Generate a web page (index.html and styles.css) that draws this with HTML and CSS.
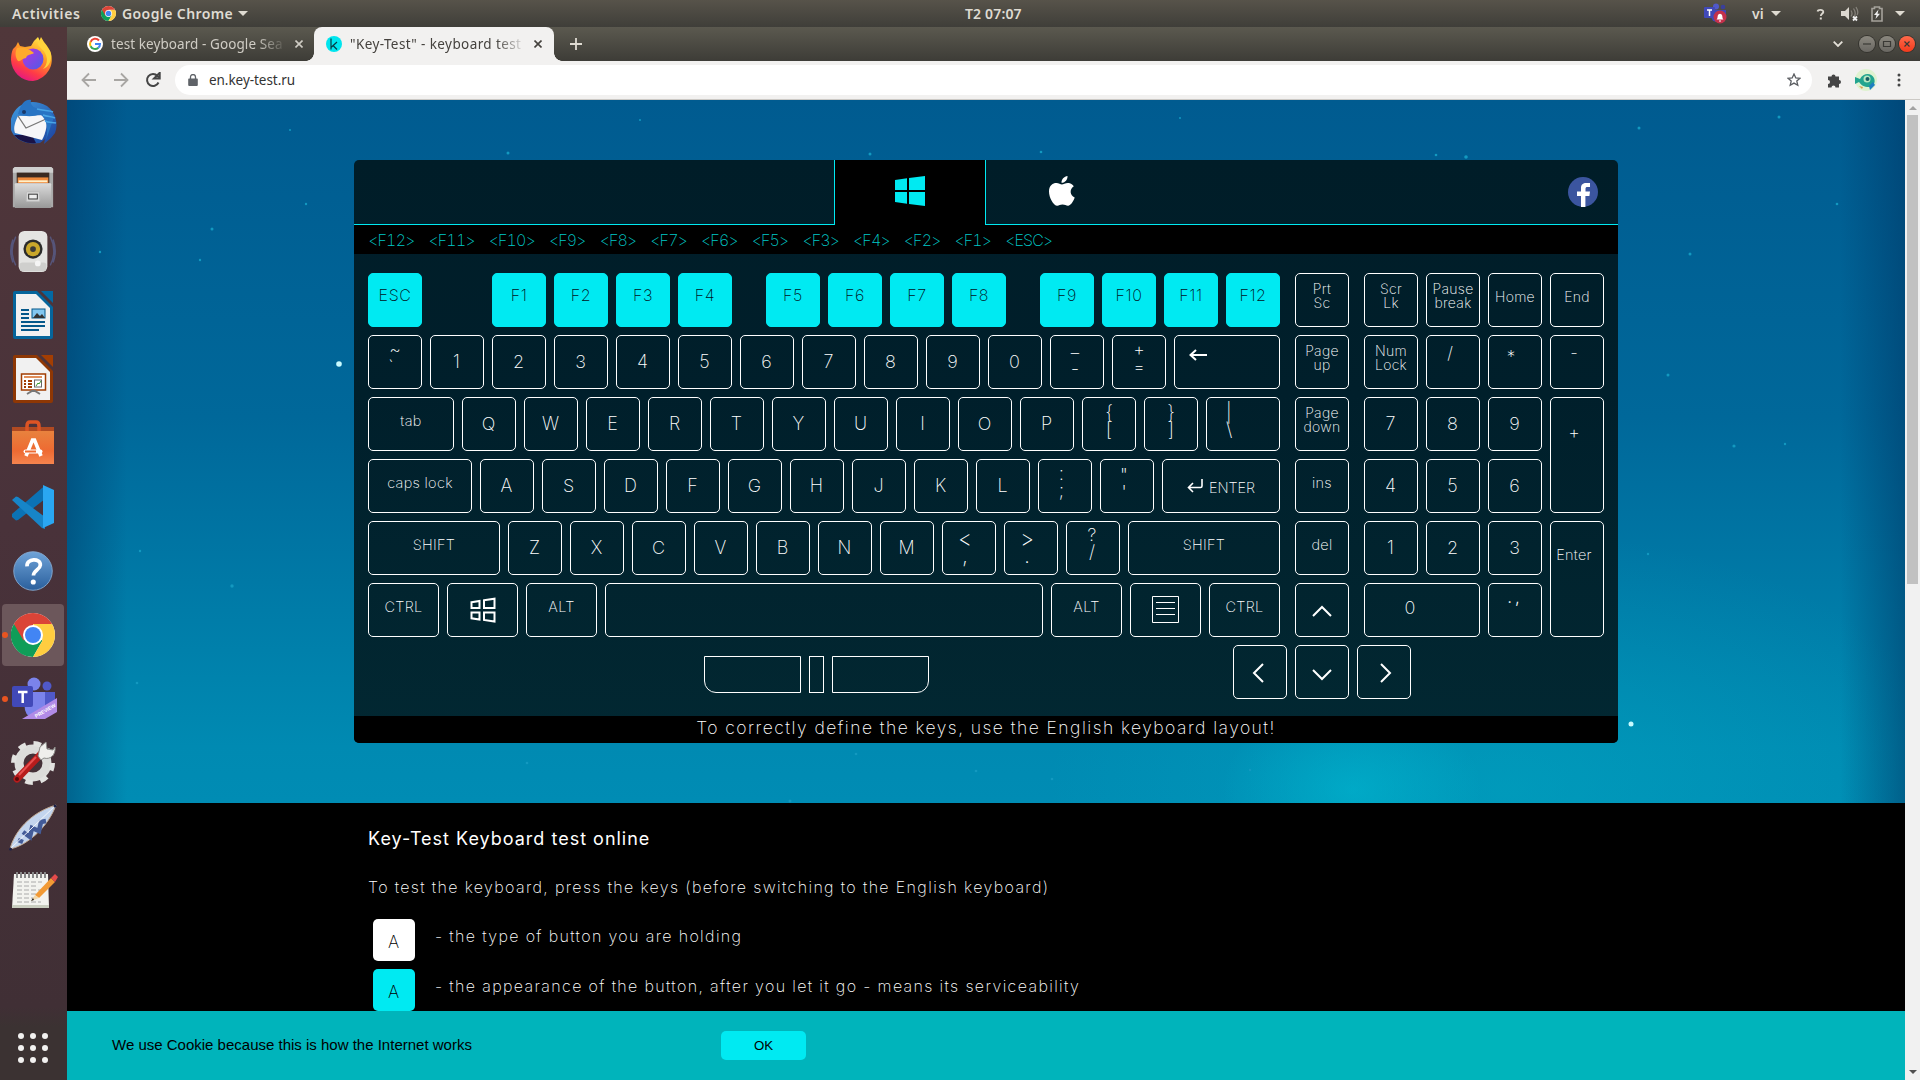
FILE: index.html
```html
<!DOCTYPE html>
<html lang="en">
<head>
<meta charset="utf-8">
<title>"Key-Test" - keyboard test online</title>
<link rel="stylesheet" href="styles.css">
</head>
<body>
<svg class="defs" aria-hidden="true">
  <defs>
    <linearGradient id="fox" x1="0.8" y1="0" x2="0.3" y2="1"><stop offset="0" stop-color="#fff04a"/><stop offset=".4" stop-color="#ff9a26"/><stop offset=".75" stop-color="#ff3b47"/><stop offset="1" stop-color="#e31587"/></linearGradient>
    <linearGradient id="globe" x1="0" y1="0" x2="1" y2="1"><stop offset="0" stop-color="#b833e1"/><stop offset="1" stop-color="#4c5ce8"/></linearGradient>
    <linearGradient id="bird" x1="0" y1="0" x2="1" y2="1"><stop offset="0" stop-color="#3f9be0"/><stop offset="1" stop-color="#1b3f9c"/></linearGradient>
    <linearGradient id="steel" x1="0" y1="0" x2="0" y2="1"><stop offset="0" stop-color="#dcdcdc"/><stop offset="1" stop-color="#989898"/></linearGradient>
    <linearGradient id="help" x1="0" y1="0" x2="0" y2="1"><stop offset="0" stop-color="#6fa3d8"/><stop offset="1" stop-color="#2a5f9c"/></linearGradient>
    <linearGradient id="bag" x1="0" y1="0" x2="0" y2="1"><stop offset="0" stop-color="#e8823e"/><stop offset=".6" stop-color="#ee6a32"/><stop offset="1" stop-color="#f5844e"/></linearGradient>
    <symbol id="chrome" viewBox="0 0 44 44">
      <circle cx="22" cy="22" r="22" fill="#fff"/>
      <path d="M2.900 11A22 22 0 0 0 22 44l9.500-16.500L22 22z" fill="#0f9d58"/>
      <path d="M41 11H22l9.500 16.500L22 44A22 22 0 0 0 41 11z" fill="#ffcd40"/>
      <path d="M2.900 11 12.500 27.500 22 22 22 11H41A22 22 0 0 0 2.900 11z" fill="#db4437"/>
      <circle cx="22" cy="22" r="10" fill="#fff"/><circle cx="22" cy="22" r="8" fill="#4285f4"/>
    </symbol>
  </defs>
</svg>

<header class="topbar">
  <span class="activities">Activities</span>
  <svg class="app-ico" viewBox="0 0 44 44"><use href="#chrome"/></svg>
  <span class="appname">Google Chrome</span>
  <i class="caret"></i>
  <span class="clock">T2 07:07</span>
  <div class="tray">
    <svg width="24" height="22" viewBox="0 0 24 22"><circle cx="12" cy="3.500" r="3" fill="#5059c9"/><circle cx="19" cy="4" r="2.300" fill="#3a3f9c"/><path d="M7 7h15v6a6 6 0 0 1-6 6h-3a6 6 0 0 1-6-6z" fill="#4048b5"/><rect y="4" width="11" height="11" rx="1" fill="#4149b8"/><path d="M3 7h5M5.500 7v6" stroke="#fff" stroke-width="1.500"/><circle cx="16" cy="14" r="6.500" fill="#c4314b"/><path d="M12.500 16.500c1.200-1 1-2.500 1.300-4a2.300 2.300 0 0 1 4.400 0c.3 1.500.1 3 1.300 4zM15 17.500h2v1h-2z" fill="#fff"/></svg>
    <span class="lang">vi</span><i class="caret c2"></i>
    <svg class="t-q" width="12" height="14" viewBox="0 0 12 14"><path d="M2.500 4.500C3 2.500 8.500 2.200 8.300 5 8 6.800 5.800 6.800 5.800 9" fill="none" stroke="#dcd8d0" stroke-width="1.800"/><rect x="4.800" y="10.500" width="2" height="2" fill="#dcd8d0"/></svg>
    <svg class="t-s" width="18" height="16" viewBox="0 0 18 16"><path d="M0 5h4l4-4v13l-4-4H0z" fill="#dcd8d0"/><path d="M10 4.500q2 3 0 6M12.500 2.500q3.500 5 0 9.500M15 1q3 5 1 8" fill="none" stroke="#85827b" stroke-width="1.300"/><path d="m12 10.500 4 4m0-4-4 4" stroke="#eee" stroke-width="1.800"/></svg>
    <svg class="t-b" width="12" height="16" viewBox="0 0 12 16"><path d="M1 2.500h2.500V1h5v1.500H11V15H1z" fill="none" stroke="#a5a29b" stroke-width="1.600"/><path d="M7.500 3.500 3 9h2.500L4.500 13 9 7.800H6.500z" fill="#eee"/></svg>
    <i class="caret c3"></i>
  </div>
</header>

<div class="desk">
<nav class="dock">
  <div class="slot s1"><svg viewBox="0 0 48 48"><path d="M4 14l3-3 2-4 2 4 5 1 6-1 3-5 4-4 3 6 4 3 1 3 4 2c3 7 2 14-1 19A22 22 0 0 1 24 46 22 22 0 0 1 2 25c0-4 .5-8 2-11z" fill="url(#fox)"/><circle cx="24" cy="24" r="10.500" fill="url(#globe)"/><path d="M8 13c6-1 9 0 13 2l4 3c-3 2-7 1-8 5-3 0-6 4-8 3-3-4-3-9-1-13z" fill="#ffab2e"/><path d="M29 9c1 4 8 6 9 15 0 5-2 8-4 10 6-2 9-9 8-15-1-5-4-8-7-12l-3-5z" fill="#ffd43c"/></svg></div>
  <div class="slot s2"><svg viewBox="0 0 48 48"><path d="M2 20C6 5 22-2 38 7c8 6 12 17 8 27l-4 5-7 6 1-5-5 4C16 46 5 40 2 31z" fill="url(#bird)"/><path d="M5 36c5 6 14 9 22 8l-4-8z" fill="#191347"/><path d="M9 17l28-1c2 8 0 18-4 25L6 34c-2-5 0-11 3-17z" fill="#f6f6f8"/><path d="m9 17 8 12 20-9" fill="none" stroke="#777" stroke-width="1.300"/><path d="M9 15C12 4 17 0 22 1c-2 7 8 11 17 9l6 8-8 23c2-9 2-20-6-26-6 3-15 3-22 0z" fill="#2874c4"/><path d="M28 10c7 2 12 1 16 3M34 16c5 2 8 1 12 3M36 22c4 2 7 1 11 2" stroke="#49a5e6" stroke-width="1.500" fill="none"/><circle cx="15" cy="13" r="2" fill="#18396b"/></svg></div>
  <div class="slot s3"><svg viewBox="0 0 48 48"><path d="M3 5l2-2h38l2 2v40H3z" fill="#aaa"/><path d="M3 5l2-2h38l2 2v4H3z" fill="#cfcfcf"/><rect x="7" y="9" width="34" height="11" fill="#3a2a22"/><path d="M8 14h32v6H8z" fill="#f08a3c"/><path d="M9 17h30v2H9z" fill="#fff0c8"/><rect x="5" y="20" width="38" height="26" rx="1" fill="url(#steel)"/><rect x="17" y="29" width="14" height="10" rx="1" fill="#d8d8d8" stroke="#bbb"/><rect x="19.500" y="31.500" width="9" height="5" fill="#eee" stroke="#333"/></svg></div>
  <div class="slot s4"><svg viewBox="0 0 48 48"><path d="M6 9C1 19 1 29 6 39M3 12c-3 8-3 16 0 24M42 9c5 10 5 20 0 30M45 12c3 8 3 16 0 24" fill="none" stroke="#56557a" stroke-width="1.500"/><rect x="9" y="3" width="30" height="43" rx="6" fill="#e4e4e2"/><rect x="10" y="36" width="28" height="9" rx="3" fill="#cfcfcd"/><circle cx="24" cy="22" r="10" fill="#2b2b2b"/><circle cx="24" cy="22" r="7.500" fill="#c9a72b"/><circle cx="24" cy="22" r="3" fill="#3b3a38"/><circle cx="29" cy="37" r="3" fill="#f5f5f5"/></svg></div>
  <div class="slot s5"><svg viewBox="0 0 48 48"><path d="M6 0h22l16 16v30a2 2 0 0 1-2 2H6a2 2 0 0 1-2-2V2a2 2 0 0 1 2-2z" fill="#05659b"/><path d="M7 3h20l14 14v28H7z" fill="#f1f1f1"/><path d="M32 0h12v12z" fill="#0369a3"/><path d="M12 19h8M12 23h8M12 27h8M12 31h24M12 35h24M12 39h18" stroke="#05588a" stroke-width="2"/><rect x="23" y="18" width="13" height="9" fill="#83c7f0" stroke="#05588a"/><path d="m24 27 4-5 3 3 2-2 3 4z" fill="#333"/></svg></div>
  <div class="slot s6"><svg viewBox="0 0 48 48"><path d="M6 0h22l16 16v30a2 2 0 0 1-2 2H6a2 2 0 0 1-2-2V2a2 2 0 0 1 2-2z" fill="#8e3704"/><path d="M7 3h20l14 14v28H7z" fill="#f1f1f1"/><path d="M32 0h12v12z" fill="#a33e03"/><rect x="12.500" y="19" width="24" height="16" fill="#fff" stroke="#a13e03" stroke-width="1.500"/><path d="M15 22h18" stroke="#e08f5b" stroke-width="2"/><path d="M15 26h8M15 29h8M15 32h8" stroke="#a13e03" stroke-width="2" stroke-dasharray="2 2 5"/><rect x="25.500" y="25" width="7" height="7" fill="#fff" stroke="#666"/><path d="m27 31 2-3 1 1 2-3" stroke="#3a9b2d" fill="none"/><path d="m18 39 5-3h3l5 3" fill="none" stroke="#777" stroke-width="2"/></svg></div>
  <div class="slot s7"><svg viewBox="0 0 48 48"><path d="M3 8h42v7H3z" fill="#b04a22"/><path d="M18 15V7q0-4 3-4h6q3 0 3 4v8" fill="none" stroke="#dd5424" stroke-width="3.500"/><path d="M3 12h42v33H3z" fill="url(#bag)"/><path d="m17 37 6.500-16h2L32 37" fill="none" stroke="#fff" stroke-width="3.600"/><rect x="14.500" y="30.500" width="19" height="4" rx="2" fill="#fff"/><path d="M16 32.500h11" stroke="#ee6a32" stroke-width="2"/></svg></div>
  <div class="slot s8"><svg viewBox="0 0 48 48"><path d="m3 31 30-26 3-2v13L9 37l-2 .500-4-3.500z" fill="#0b72b5"/><path d="m3 17 4-3.500 2 .5 27 20v12l-3-1L3 17z" fill="#1785c8"/><path d="m34 2 11 5v33l-11 5z" fill="#2aa7f2"/></svg></div>
  <div class="slot s9"><svg viewBox="0 0 48 48"><circle cx="24" cy="24" r="21" fill="url(#help)" stroke="#84a9d0"/><path d="M17.500 19c-1-9 15-9.500 14.500-1.500-.5 5.500-7.500 5.500-7.500 11.500" fill="none" stroke="#fff" stroke-width="4"/><circle cx="24.300" cy="36" r="2.800" fill="#fff"/></svg></div>
  <div class="slot s10 active"><svg viewBox="0 0 44 44"><use href="#chrome"/></svg></div>
  <div class="slot s11 running"><svg viewBox="0 0 48 48"><circle cx="25" cy="9" r="6.500" fill="#7b83eb"/><circle cx="38" cy="11" r="4.500" fill="#5059c9"/><path d="M34 17h12v14a8 8 0 0 1-10 7z" fill="#5059c9"/><path d="M14 17h22v14a10 10 0 0 1-20 4z" fill="#7b83eb"/><rect x="3" y="11" width="21" height="21" rx="2" fill="#4149b8"/><path d="M9 17h9.500M13.700 17v11" stroke="#fff" stroke-width="2.500"/><path d="M13 44 48 23v14L36 44z" fill="#b18be6"/><text transform="translate(27 43) rotate(-30)" class="preview">PREVIEW</text></svg></div>
  <div class="slot s12"><svg viewBox="0 0 48 48"><circle cx="24" cy="24" r="14" fill="none" stroke="#dcdcda" stroke-width="9"/><circle cx="24" cy="24" r="19.500" fill="none" stroke="#e2e2e0" stroke-width="5" stroke-dasharray="7.600 7.700"/><path d="m8 40 24-25" stroke="#b71c1c" stroke-width="7" stroke-linecap="round"/><path d="m10 36 17-18" stroke="#e85050" stroke-width="2"/><circle cx="8" cy="40" r="2" fill="#5c0a0a"/><path d="m29 17 2-9 6-5 1 7 6 1 2-3c1 8-5 13-11 11l-3 2z" fill="#efefec" stroke="#8b8b88"/></svg></div>
  <div class="slot s13"><svg viewBox="0 0 48 48"><path d="M1 46C5 30 20 10 47 2 40 22 20 42 1 46z" fill="#c3d5ee" stroke="#c2aa93"/><path d="M9 37l5 2M14 29l7 5 2-9 7 3 2-9 5-1" fill="none" stroke="#435b98" stroke-width="4.500"/><path d="M1 46 47 2" stroke="#f3f6fa"/><circle cx="1.500" cy="46" r="1.500" fill="#1c2148"/><circle cx="46" cy="3" r="1.500" fill="#1c2148"/></svg></div>
  <div class="slot s14"><svg viewBox="0 0 48 48"><path d="M5 7h34l1 34H3z" fill="#f3f3ef"/><path d="M3 38h37v3H3z" fill="#c9cdbf"/><path d="M8 15h25M8 19h20M8 23h24M8 27h20M8 31h18M8 35h24" stroke="#aaa" stroke-dasharray="5 2"/><path d="M8 5v6M12 5v6M16 5v6M20 5v6M24 5v6M28 5v6M32 5v6M36 5v6" stroke="#888" stroke-width="2"/><path d="m26 28 16-17 4 4-16 16z" fill="#f29a35"/><path d="m42 11 4-4 3 3-3 5z" fill="#e34b4b"/><path d="m26 28 4 3-8 3z" fill="#f3d9aa"/><path d="m22 34 2-3 1 2z" fill="#222"/></svg></div>
  <div class="slot grid9"><svg viewBox="0 0 48 48" fill="#f2f1f0"><circle cx="12" cy="12" r="3"/><circle cx="24" cy="12" r="3"/><circle cx="36" cy="12" r="3"/><circle cx="12" cy="24" r="3"/><circle cx="24" cy="24" r="3"/><circle cx="36" cy="24" r="3"/><circle cx="12" cy="36" r="3"/><circle cx="24" cy="36" r="3"/><circle cx="36" cy="36" r="3"/></svg></div>
</nav>

<div class="browser">
  <div class="tabs">
    <div class="tab">
      <svg class="fav" viewBox="0 0 16 16"><circle cx="8" cy="8" r="8" fill="#fff"/><path d="M12 4.500A5 5 0 0 0 3.600 5.800" fill="none" stroke="#ea4335" stroke-width="2"/><path d="M3.600 5.700a5 5 0 0 0 0 4.600" fill="none" stroke="#fbbc05" stroke-width="2"/><path d="M3.600 10.200a5 5 0 0 0 7.800 1.500" fill="none" stroke="#34a853" stroke-width="2"/><path d="M11.300 11.800A5 5 0 0 0 13 8H8" fill="none" stroke="#4285f4" stroke-width="2"/></svg>
      <span class="tt">test keyboard - Google Sea</span>
      <svg class="x" viewBox="0 0 8 8"><path d="m.5.500 7 7m0-7-7 7"/></svg>
    </div>
    <div class="tab on">
      <svg class="fav" viewBox="0 0 16 16"><circle cx="8" cy="8" r="8" fill="#00e5ee"/><path d="M5 2.500v11M11 6l-6 5.500M7 9.500l4 4" fill="none" stroke="#063b45" stroke-width="1.200"/></svg>
      <span class="tt">"Key-Test" - keyboard test</span>
      <svg class="x" viewBox="0 0 8 8"><path d="m.5.500 7 7m0-7-7 7"/></svg>
    </div>
    <svg class="plus" viewBox="0 0 12 12"><path d="M6 0v12M0 6h12"/></svg>
    <div class="winctl">
      <svg width="10" height="6" viewBox="0 0 10 6"><path d="m.7.700 4.300 4.300L9.300.700" fill="none" stroke="#e4e0d8" stroke-width="1.800"/></svg>
      <i class="wc"><svg viewBox="0 0 16 16"><path d="M4 8h8"/></svg></i>
      <i class="wc"><svg viewBox="0 0 16 16"><path d="M4.500 5.500h7v5h-7z"/></svg></i>
      <i class="wc red"><svg viewBox="0 0 16 16"><path d="m5.500 5.500 5 5m0-5-5 5"/></svg></i>
    </div>
  </div>
  <div class="toolbar">
    <svg class="nav dim" viewBox="0 0 16 16"><path d="M15 8H2M8 1.500 1.500 8 8 14.500"/></svg>
    <svg class="nav dim" viewBox="0 0 16 16"><path d="M1 8h13M8 1.500 14.500 8 8 14.500"/></svg>
    <svg class="nav" viewBox="0 0 16 16"><path d="M13.500 10.500A6 6 0 1 1 12.500 4l1.500 1.500"/><path d="M14.700.8v5.700H9z" fill="#454545" stroke="none"/></svg>
    <div class="omni">
      <svg width="10" height="12" viewBox="0 0 10 12"><path d="M1 4.500h8a.8.8 0 0 1 .8.8V11a1 1 0 0 1-1 1H1.200a1 1 0 0 1-1-1V5.300a.8.8 0 0 1 .8-.8z" fill="#5f6368"/><path d="M2.500 5V3a2.500 2.500 0 0 1 5 0v2" fill="none" stroke="#5f6368" stroke-width="1.300"/></svg>
      <span>en.key-test.ru</span>
      <svg class="star" width="14" height="14" viewBox="0 0 14 14"><path d="m7 1 1.800 3.900 4.200.4-3.200 2.800 1 4.200L7 10.100l-3.800 2.200 1-4.200L1 5.300l4.200-.4z" fill="none" stroke="#5a5d61" stroke-width="1.300"/></svg>
    </div>
    <svg class="puz" width="15" height="15" viewBox="0 0 15 15"><path d="M1 3.500h3.500a2 2 0 1 1 4 0H12V7a2 2 0 1 1 0 4v3.500H8.500a2 2 0 0 0-4 0H1V11a2 2 0 0 0 0-4z" fill="#454545"/></svg>
    <svg class="ava" width="22" height="22" viewBox="0 0 22 22"><circle cx="11" cy="11" r="11" fill="#dff2d0"/><path d="M0 8l5 2c3-6 11-7 14-1 2 5-1 9-5 9-5 0-8-2-10-5l-4 2z" fill="#23a58f"/><circle cx="12" cy="10" r="3.500" fill="#b6e8c0"/><circle cx="12.500" cy="10" r="2" fill="#155e63"/><path d="M14 17l4-4 2 3-5 5z" fill="#1f7fc0"/><path d="M4 17l4 1-1 2z" fill="#d99a4a"/></svg>
    <svg class="dots" width="4" height="14" viewBox="0 0 4 14" fill="#454545"><circle cx="2" cy="2" r="1.500"/><circle cx="2" cy="7" r="1.500"/><circle cx="2" cy="12" r="1.500"/></svg>
  </div>

  <div class="view">
  <div class="page">
    <section class="sky">
      <svg class="stars" width="1838" height="703" viewBox="67 100 1838 703" fill="#1399c0">
        <circle cx="339" cy="364" r="2.800" fill="#c8fbff"/><circle cx="1631" cy="724" r="2.500" fill="#c8fbff"/>
        <circle cx="1779" cy="117" r="1.500"/><circle cx="1639" cy="128" r="1.500"/><circle cx="1466" cy="157" r="1.800"/><circle cx="1436" cy="155" r="1.300"/><circle cx="508" cy="153" r="1.500"/><circle cx="870" cy="154" r="1.500"/><circle cx="1041" cy="152" r="1.300"/><circle cx="212" cy="229" r="1.500"/><circle cx="200" cy="260" r="1.200"/><circle cx="306" cy="204" r="1.200"/><circle cx="1690" cy="254" r="1.500"/><circle cx="1668" cy="375" r="1.500"/><circle cx="1734" cy="446" r="1.600"/><circle cx="1785" cy="444" r="1.200"/><circle cx="1837" cy="204" r="1.300"/><circle cx="232" cy="586" r="1.700"/><circle cx="137" cy="683" r="1.300"/><circle cx="140" cy="551" r="1.200"/><circle cx="1648" cy="554" r="1.200"/><circle cx="527" cy="763" r="1.300"/><circle cx="976" cy="771" r="1.300"/><circle cx="1052" cy="779" r="1.300"/><circle cx="790" cy="801" r="1.500"/><circle cx="1250" cy="770" r="1.200"/><circle cx="856" cy="754" r="1.300"/><circle cx="290" cy="130" r="1"/><circle cx="640" cy="120" r="1"/><circle cx="1180" cy="118" r="1"/><circle cx="100" cy="252" r="1.200"/>
      </svg>
      <div class="board">
        <div class="oshead">
          <span class="blank"></span>
          <span class="os sel"><svg width="30" height="30" viewBox="0 0 30 30"><path d="M0 4l12-1.800V14H0zM14 2 30 0v14H14zM0 16h12v11.800L0 26zM14 16h16v14l-16-2z" fill="#00eaf2"/></svg></span>
          <span class="os mac"><svg width="26" height="30" viewBox="0 0 26 30" fill="#fff"><path d="M18.500 0c.3 3.500-2.700 7-6 6.800C12.200 3.500 15.200.4 18.500 0z"/><path d="M24.800 10.300c-4.600 2.800-4 9.300.9 11.300-1 3.200-3.500 7.600-6.300 8.100-2 .3-3.300-1.200-5.900-1.200-2.700 0-3.600 1.500-5.700 1.200C4.200 29.100 0 21.500 0 15.500 0 9 4.500 6.800 7.500 7c2.200.1 4 1.500 5.400 1.500 1.400 0 3.600-1.700 6.500-1.500 2 .1 4.200 1.200 5.400 3.300z"/></svg></span>
          <svg class="fb" width="30" height="30" viewBox="0 0 30 30"><circle cx="15" cy="15" r="15" fill="#3b559f"/><path d="M13 30V19H9v-4.500h4V11c0-3.600 2.200-5 5-5h4v4h-2.500c-1.500 0-2 .5-2 2v2.500H22l-.6 4.500h-4v11z" fill="#fff"/></svg>
        </div>
        <div class="log"><span>&lt;F12&gt;</span><span>&lt;F11&gt;</span><span>&lt;F10&gt;</span><span>&lt;F9&gt;</span><span>&lt;F8&gt;</span><span>&lt;F7&gt;</span><span>&lt;F6&gt;</span><span>&lt;F5&gt;</span><span>&lt;F3&gt;</span><span>&lt;F4&gt;</span><span>&lt;F2&gt;</span><span>&lt;F1&gt;</span><span>&lt;ESC&gt;</span></div>
        <div class="keys">
          <div class="main">
            <div class="row fn"><div class="grp"><b class="k hit">ESC</b></div><div class="grp"><b class="k hit">F1</b><b class="k hit">F2</b><b class="k hit">F3</b><b class="k hit">F4</b></div><div class="grp"><b class="k hit">F5</b><b class="k hit">F6</b><b class="k hit">F7</b><b class="k hit">F8</b></div><div class="grp"><b class="k hit">F9</b><b class="k hit">F10</b><b class="k hit">F11</b><b class="k hit">F12</b></div></div>
            <div class="row"><b class="k two tilde"><span>~</span><span>`</span></b><b class="k">1</b><b class="k">2</b><b class="k">3</b><b class="k">4</b><b class="k">5</b><b class="k">6</b><b class="k">7</b><b class="k">8</b><b class="k">9</b><b class="k">0</b><b class="k two dash"><span>_</span><span>-</span></b><b class="k two eq"><span>+</span><span>=</span></b><b class="k grow back"><svg width="18" height="12" viewBox="0 0 18 12"><path d="M18 6H1.500M7 1 1.500 6 7 11"/></svg></b></div>
            <div class="row"><b class="k sm w-tab">tab</b><b class="k">Q</b><b class="k">W</b><b class="k">E</b><b class="k">R</b><b class="k">T</b><b class="k">Y</b><b class="k">U</b><b class="k">I</b><b class="k">O</b><b class="k">P</b><b class="k two br"><span>{</span><span>[</span></b><b class="k two br"><span>}</span><span>]</span></b><b class="k two br bs grow"><span>|</span><span>\</span></b></div>
            <div class="row"><b class="k sm w-caps">caps lock</b><b class="k">A</b><b class="k">S</b><b class="k">D</b><b class="k">F</b><b class="k">G</b><b class="k">H</b><b class="k">J</b><b class="k">K</b><b class="k">L</b><b class="k two semi"><span>:</span><span>;</span></b><b class="k two quo"><span>"</span><span>'</span></b><b class="k sm grow ent"><svg width="16" height="14" viewBox="0 0 16 14"><path d="M15 0v7q0 1.500-1.500 1.500H1.500M6 4 1.500 8.500 6 13"/></svg>ENTER</b></div>
            <div class="row"><b class="k sm w-ls">SHIFT</b><b class="k">Z</b><b class="k">X</b><b class="k">C</b><b class="k">V</b><b class="k">B</b><b class="k">N</b><b class="k">M</b><b class="k two lt"><span>&lt;</span><span>,</span></b><b class="k two lt"><span>&gt;</span><span>.</span></b><b class="k two qm"><span>?</span><span>/</span></b><b class="k sm grow">SHIFT</b></div>
            <div class="row"><b class="k sm w-c">CTRL</b><b class="k w-c"><svg width="26" height="26" viewBox="0 0 26 26"><path d="M1.500 5.200 9.500 4v7H1.500zM14 3.300 24.500 1.700V11H14zM1.500 15.500h8v7l-8-1.200zM14 15.500h10.500v9L14 23z"/></svg></b><b class="k sm w-c">ALT</b><b class="k grow"></b><b class="k sm w-c">ALT</b><b class="k w-c"><svg class="menu" width="27" height="27" viewBox="0 0 27 27"><path d="M.5.500h26v26H.5zM4 6.500h19M4 12.500h19M4 18.500h19"/></svg></b><b class="k sm w-c">CTRL</b></div>
          </div>
          <div class="side">
            <b class="k sm ml">Prt<br>Sc</b><b class="k sm ml">Page<br>up</b><b class="k sm ml">Page<br>down</b><b class="k sm">ins</b><b class="k sm">del</b><b class="k up-key"><svg width="20" height="12" viewBox="0 0 20 12"><path d="m1 11 9-9 9 9"/></svg></b>
          </div>
          <div class="pad">
            <b class="k sm ml">Scr<br>Lk</b><b class="k sm ml">Pause<br>break</b><b class="k sm mid">Home</b><b class="k sm mid">End</b>
            <b class="k sm ml">Num<br>Lock</b><b class="k op">/</b><b class="k op star2">*</b><b class="k op">-</b>
            <b class="k">7</b><b class="k">8</b><b class="k">9</b><b class="k tall pl">+</b>
            <b class="k">4</b><b class="k">5</b><b class="k">6</b>
            <b class="k">1</b><b class="k">2</b><b class="k">3</b><b class="k sm tall en">Enter</b>
            <b class="k wide zero">0</b><b class="k op dot">.,</b>
          </div>
        </div>
        <div class="bottom">
          <div class="touch"><i class="tl"></i><i class="tm"></i><i class="tr"></i></div>
          <div class="arrows">
            <b class="k lf"><svg width="12" height="20" viewBox="0 0 12 20"><path d="M11 1 2 10l9 9"/></svg></b>
            <b class="k"><svg class="dn" width="20" height="12" viewBox="0 0 20 12"><path d="m1 1 9 9 9-9"/></svg></b>
            <b class="k rt"><svg width="12" height="20" viewBox="0 0 12 20"><path d="m1 1 9 9-9 9"/></svg></b>
          </div>
        </div>
        <div class="hint">To correctly define the keys, use the English keyboard layout!</div>
      </div>
    </section>
    <section class="info">
      <h1>Key-Test Keyboard test online</h1>
      <p class="lead">To test the keyboard, press the keys (before switching to the English keyboard)</p>
      <div class="leg"><b class="demo">A</b><span>- the type of button you are holding</span></div>
      <div class="leg l2"><b class="demo cy">A</b><span>- the appearance of the button, after you let it go - means its serviceability</span></div>
    </section>
    <footer class="cookie"><span>We use Cookie because this is how the Internet works</span><button>OK</button></footer>
  </div>
  <div class="scroll"><i class="up"></i><i class="thumb"></i><i class="down"></i></div>
  </div>
</div>
</div>
</body>
</html>
```
FILE: styles.css
```css
* { box-sizing: border-box; }
body { margin: 0; width: 1920px; height: 1080px; overflow: hidden; font-family: "Noto Sans", sans-serif; background: #000; }
.defs { position: absolute; width: 0; height: 0; }
svg { display: block; flex: none; }

/* desktop top bar */
.topbar { height: 27px; display: flex; align-items: center; background: linear-gradient(#57534a, #3f3e39); color: #dfdbd2; font: 600 14px "Noto Sans", sans-serif; padding-left: 12px; }
.activities { width: 89px; letter-spacing: .6px; }
.app-ico { width: 15px; height: 15px; }
.appname { margin-left: 6px; width: 116px; white-space: nowrap; letter-spacing: .4px; }
.caret { border: 5px solid transparent; border-top: 5px solid #dfdbd2; border-bottom: 0; }
.clock { margin-left: 717px; width: 90px; letter-spacing: .15px; }
.tray { display: flex; align-items: center; margin-left: 649px; }
.lang { margin-left: 24px; width: 19px; }
.t-q { margin-left: 34px; }
.t-s { margin-left: 14px; }
.t-b { margin-left: 12px; }
.c3 { margin-left: 12px; }

.desk { display: flex; height: 1053px; }
.dock { width: 67px; background: linear-gradient(#50373a 0, #49323a 500px, #402f35 980px, #3b3232 1000px); display: flex; flex-direction: column; padding-top: 1px; }
.slot { position: relative; height: 62px; margin: 0 3px 2px 2px; display: flex; align-items: center; justify-content: center; border-radius: 4px; flex: none; }
.slot svg { width: 48px; height: 48px; overflow: visible; }
.s3 svg, .s4 svg { height: 46px; }
.s9 svg { width: 44px; }
.active { background: #6c575b; }
.active svg { width: 44px; height: 44px; }
.active::before, .running::before { content: ""; position: absolute; left: 0; top: 28px; width: 6px; height: 6px; border-radius: 50%; background: #e95420; }
.grid9 { margin-top: auto; margin-bottom: 1px; }
.preview { font: bold 5px "Liberation Sans", sans-serif; fill: #fff; }

.browser { flex: 1; display: flex; flex-direction: column; }
.tabs { height: 34px; display: flex; align-items: center; background: linear-gradient(#5b594f, #3d3c37); color: #cfccc4; font-size: 13.500px; padding-left: 7px; }
.tab { width: 240px; height: 34px; display: flex; align-items: center; padding-left: 13px; }
.tab.on { background: #f2f1f0; color: #45423e; border-radius: 8px 8px 0 0; position: relative; padding-left: 12px; }
.tab.on::before, .tab.on::after { content: ""; position: absolute; bottom: 0; width: 8px; height: 8px; }
.tab.on::before { left: -8px; background: radial-gradient(circle at 0 0, transparent 7.500px, #f2f1f0 8px); }
.tab.on::after { right: -8px; background: radial-gradient(circle at 100% 0, transparent 7.500px, #f2f1f0 8px); }
.fav { width: 16px; height: 16px; }
.tt { margin-left: 8px; width: 176px; white-space: nowrap; letter-spacing: .08px; -webkit-mask: linear-gradient(90deg, #000 146px, transparent 176px); }
.x { width: 8px; height: 8px; margin-left: 8px; }
.x path { stroke: currentColor; stroke-width: 1.600; }
.tab.on .tt { letter-spacing: .4px; }
.plus { width: 12px; height: 12px; margin-left: 16px; }
.plus path { stroke: #dfdbd2; stroke-width: 1.800; }
.winctl { margin-left: auto; display: flex; align-items: center; gap: 4px; padding-right: 5px; }
.winctl > svg { margin-right: 12px; }
.wc { width: 16px; height: 16px; border-radius: 50%; background: linear-gradient(#8b887f, #696762); box-shadow: 0 0 0 1px #35342f; }
.wc path { fill: none; stroke: #3a3935; stroke-width: 1.200; }
.wc.red { background: linear-gradient(#ff6a4a, #f23a1c); }

.toolbar { height: 39px; background: #f2f1f0; border-bottom: 1px solid #ccc9c5; display: flex; align-items: center; padding-left: 14px; }
.nav { width: 16px; height: 16px; margin-right: 16px; }
.nav path { fill: none; stroke: #454545; stroke-width: 2; }
.nav.dim path { stroke: #a8a6a3; stroke-width: 1.800; }
.omni { width: 1637px; height: 30px; border-radius: 15px; background: #fff; margin-left: -2px; display: flex; align-items: center; padding-left: 13px; font-size: 13.500px; color: #333; letter-spacing: -.05px; }
.omni span { margin-left: 11px; }
.star { margin-left: auto; margin-right: 11px; }
.puz { margin-left: 15px; }
.ava { margin-left: 13px; }
.dots { margin-left: 20px; }

/* page viewport */
.view { height: 980px; display: flex; }
.page { width: 1838px; font-family: Inter, sans-serif; font-weight: 200; }
.sky { position: relative; height: 703px; padding-top: 60px; background:
  linear-gradient(90deg, rgba(0,52,98,.45), transparent 60px, transparent 1773px, rgba(0,52,98,.5)),
  radial-gradient(ellipse 130px 90px at 1285px 690px, rgba(0,200,220,.4), transparent),
  radial-gradient(ellipse 460px 260px at 1440px 690px, rgba(0,180,200,.35), transparent),
  linear-gradient(#005b90, #00689a 45%, #008ab2 92%, #008cb4); }
.stars { position: absolute; left: 0; top: 0; }
.board { position: relative; width: 1264px; height: 583px; margin-left: 287px; border-radius: 5px; overflow: hidden; background: linear-gradient(#001d28, #001f2b 40%, #022832); }
.oshead { height: 65px; display: flex; position: relative; }
.blank { width: 480px; border-bottom: 1px solid #00eaf2; }
.os { display: flex; padding-top: 16px; }
.sel { width: 152px; background: #000; border: solid #00eaf2; border-width: 0 1px; padding-left: 60px; }
.mac { flex: 1; border-bottom: 1px solid #00eaf2; padding-left: 63px; }
.fb { position: absolute; right: 20px; top: 17px; }
.log { height: 29px; background: #000; color: #00c9c8; display: flex; gap: 13.500px; padding-left: 14px; font-size: 16px; line-height: 31px; font-weight: 200; letter-spacing: -.8px; font-variant-numeric: tabular-nums; }
.keys { display: flex; gap: 15px; padding: 19px 0 0 14px; }
.main { width: 912px; display: flex; flex-direction: column; gap: 8px; }
.row, .grp { display: flex; gap: 8px; }
.fn { gap: 34px; }
.fn .grp:first-child { margin-right: 36px; }
.k { width: 54px; height: 54px; flex: none; border: 1px solid #fff; border-radius: 5px; display: flex; align-items: center; justify-content: center; color: #fff; font-weight: 200; font-size: 18px; line-height: 20px; padding-bottom: 1px; padding-right: 1px; }
.k svg path { fill: none; stroke: #fff; stroke-width: 2; }
.k svg.menu path { stroke-width: 1; }
.w-c { width: 71px; padding-right: 0; }
.grow { flex: 1; }
.hit { background: #00eaf2; border-color: #00eaf2; color: #012; font-size: 16px; padding-right: 0; padding-bottom: 10px; letter-spacing: .6px; }
.sm { font-size: 14.500px; padding-right: 0; padding-bottom: 6px; letter-spacing: .3px; }
.ml { line-height: 14px; text-align: center; padding-bottom: 9px; font-size: 14px; }
.mid { padding-bottom: 6px; font-size: 14px; }
.w-tab { width: 86px; } .w-caps { width: 104px; } .w-ls { width: 132px; }
.two { flex-direction: column; line-height: 17px; font-size: 18px; padding: 0; justify-content: flex-start; }
.tilde span:last-child { margin-right: 8px; }
.tilde { padding-top: 5px; }
.dash { padding: 2px 4px 0 0; font-size: 19px; } .dash span:last-child { margin-top: 5px; }
.eq { padding-top: 5px; }
.br { padding: 6px 0 0; font-size: 19px; }
.bs { align-items: flex-start; padding-left: 19px; }
.back { justify-content: flex-start; padding: 0 0 15px 14px; }
.semi { padding: 5px 7px 0 0; font-size: 19px; }
.quo { padding: 8px 6px 0 0; font-size: 20px; }
.ent { padding: 4px 0 0; gap: 6px; letter-spacing: -.1px; }
.ent svg { margin-top: -4px; }
.ent svg path { stroke-width: 1.600; }
.lt { padding: 8px 8px 0 0; font-size: 22px; }
.qm { padding: 4px 2px 0 0; }
.side { display: flex; flex-direction: column; gap: 8px; }
.up-key { padding: 1px 0 0; }
.pad { display: grid; grid-template-columns: repeat(4, 54px); grid-auto-rows: 54px; gap: 8px; }
.tall { grid-row: span 2; height: 116px; }
.wide { grid-column: span 2; width: 116px; padding-right: 24px; padding-bottom: 4px; }
.op { padding-bottom: 18px; padding-right: 6px; font-size: 17px; }
.star2 { padding-bottom: 11px; padding-right: 8px; }
.dot { padding-right: 0; padding-bottom: 26px; letter-spacing: 3px; font-weight: 300; }
.pl { padding: 0 6px 44px 0; }
.en { padding: 0 6px 48px 0; }
.bottom { display: flex; height: 79px; padding-top: 8px; }
.touch { display: flex; gap: 8px; margin: 11px 0 0 350px; }
.touch i { height: 37px; border: 1px solid #fff; }
.tl { width: 97px; border-bottom-left-radius: 12px; }
.tm { width: 15px; }
.tr { width: 97px; border-bottom-right-radius: 12px; }
.arrows { display: flex; gap: 8px; margin-left: 304px; }
.lf { padding: 1px 4px 0 0; }
.rt { padding: 1px 0 0 4px; }
.dn { margin-top: 6px; }
.hint { position: relative; height: 27px; background: #000; color: #fff; text-align: center; font-size: 17.500px; line-height: 24px; letter-spacing: 1.460px; }

.info { height: 208px; background: #000; color: #fff; padding-left: 301px; font-size: 16px; letter-spacing: 1.360px; }
h1 { margin: 0; padding-top: 25px; font-size: 18px; line-height: 22px; font-weight: 400; letter-spacing: 1px; }
.lead { margin: 25px 0 0; line-height: 24px; }
.leg { display: flex; margin: 20px 0 0 5px; gap: 20px; }
.l2 { margin-top: 8px; }
.leg span { line-height: 34px; }
.demo { width: 42px; height: 42px; border-radius: 5px; background: #fff; color: #000; font-weight: 200; font-size: 17px; letter-spacing: 0; text-align: center; line-height: 46px; padding-right: 1px; }
.cy { background: #00eaf2; }
.cookie { height: 69px; background: #00b4bb; color: #000; font: 15px "Liberation Sans", sans-serif; display: flex; align-items: center; padding-left: 45px; }
.cookie span { width: 609px; margin-top: -2px; }
.cookie button { width: 85px; height: 29px; border: 0; border-radius: 5px; background: #00eaf2; font: 13.300px "Liberation Sans", sans-serif; color: #000; }

.scroll { width: 15px; background: #f1f1f1; display: flex; flex-direction: column; align-items: center; }
.scroll i { flex: none; }
.up { margin-top: 6px; border: 4px solid transparent; border-top: 0; border-bottom: 4px solid #a3a3a3; }
.thumb { margin-top: 5px; width: 11px; height: 469px; background: #c1c1c1; }
.down { margin-top: auto; margin-bottom: 6px; border: 4px solid transparent; border-bottom: 0; border-top: 4px solid #505050; }
```
